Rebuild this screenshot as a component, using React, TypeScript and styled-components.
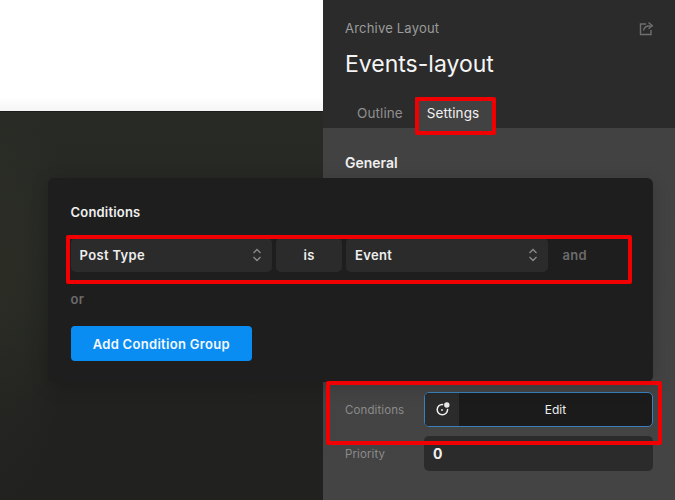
import React from "react";
import styled, { createGlobalStyle } from "styled-components";

const Global = createGlobalStyle`
  html, body { margin: 0; padding: 0; background: #222; }
  body { font-family: Inter, "Liberation Sans", sans-serif; -webkit-font-smoothing: antialiased; }
  * { box-sizing: border-box; }
`;

const Page = styled.div`
  position: relative;
  width: 675px;
  height: 500px;
  overflow: hidden;
  display: grid;
  grid-template-columns: 323px 352px;
`;

const Canvas = styled.div`
  display: flex;
  flex-direction: column;
  height: 500px;
`;

const Preview = styled.div`
  height: 111px;
  background: linear-gradient(180deg, #ffffff 0%, #ffffff 88%, #f5f5f5 100%);
`;

const Backdrop = styled.div`
  flex: 1;
  border-top: 1px solid #1c1c1c;
  background:
    radial-gradient(ellipse 70px 220px at 0% 45%, rgba(58, 62, 44, 0.3), transparent 100%),
    linear-gradient(180deg, #282a25 0%, #252622 45%, #212120 75%, #212120 100%);
`;

const Sidebar = styled.aside`
  display: flex;
  flex-direction: column;
  height: 500px;
`;

const Header = styled.header`
  height: 128px;
  background: #2b2b2b;
  padding: 20px 22px 0 22px;
  display: flex;
  flex-direction: column;
`;

const TopLine = styled.div`
  display: flex;
  justify-content: space-between;
  align-items: center;
  height: 16px;
`;

const Kicker = styled.span`
  font-size: 13px;
  letter-spacing: 0.2px;
  color: #9b9b9b;
`;

const ShareIcon = styled.svg`
  width: 15px;
  height: 15px;
  margin-right: -1px;
  fill: none;
  stroke: #6f6f6f;
  stroke-width: 1.4;
`;

const Title = styled.h1`
  margin: 13px 0 0;
  font-size: 23px;
  line-height: 30px;
  font-weight: 400;
  color: #f5f5f5;
`;

const Tabs = styled.nav`
  display: flex;
  margin-top: 18px;
  align-items: flex-end;
`;

const Tab = styled.div<{ $active?: boolean }>`
  height: 31px;
  padding: 0 ${(p) => (p.$active ? 14 : 12)}px 0 12px;
  display: flex;
  align-items: center;
  font-size: 13.5px;
  letter-spacing: 0.1px;
  color: ${(p) => (p.$active ? "#f2f2f2" : "#8f8f8f")};
  background: ${(p) => (p.$active ? "#424242" : "transparent")};
`;

const Body = styled.div`
  flex: 1;
  background: linear-gradient(180deg, #424242, #444444);
  padding: 27px 22px 0 22px;
  display: flex;
  flex-direction: column;
`;

const SectionTitle = styled.h2`
  margin: 0;
  font-size: 14px;
  line-height: 16px;
  font-weight: 600;
  color: #f0f0f0;
`;

const FieldRow = styled.div`
  display: grid;
  grid-template-columns: 79px 229px;
  align-items: center;
  margin-bottom: 9px;
`;

const Fields = styled.div`
  margin-top: 221px;
`;

const FieldLabel = styled.label`
  font-size: 11.5px;
  letter-spacing: 0.1px;
  color: #8b8b8b;
`;

const EditControl = styled.div`
  height: 35px;
  display: flex;
  border: 1px solid #3a80bd;
  border-radius: 5px;
  background: #1b1b1b;
  overflow: hidden;
`;

const EditIcon = styled.div`
  width: 34px;
  display: flex;
  align-items: center;
  justify-content: center;
  background: #2b2b2b;
`;

const EditText = styled.div`
  flex: 1;
  display: flex;
  align-items: center;
  justify-content: center;
  font-size: 12px;
  font-weight: 400;
  color: #ececec;
`;

const NumberField = styled.div`
  height: 35px;
  padding-left: 9px;
  display: flex;
  align-items: center;
  font-size: 14px;
  font-weight: 700;
  color: #f0f0f0;
  background: #2b2b2b;
  border-radius: 5px;
`;

const Modal = styled.section`
  position: absolute;
  left: 48px;
  top: 178px;
  width: 605px;
  height: 204px;
  padding: 26px 22.5px 0;
  background: #1e1e1e;
  border-radius: 6px;
  box-shadow: 0 4px 18px rgba(0, 0, 0, 0.18);
`;

const ModalTitle = styled.h3`
  margin: 0;
  font-size: 13px;
  line-height: 16px;
  font-weight: 600;
  letter-spacing: 0.2px;
  color: #f0f0f0;
`;

const ConditionRow = styled.div`
  display: flex;
  align-items: center;
  gap: 4px;
  margin-top: 18px;
`;

const SelectBox = styled.div`
  width: 201.5px;
  height: 34px;
  padding: 0 9px;
  display: flex;
  align-items: center;
  justify-content: space-between;
  background: #2b2b2b;
  border-radius: 5px;
  font-size: 13px;
  font-weight: 600;
  letter-spacing: 0.35px;
  color: #eeeeee;
`;

const Operator = styled(SelectBox)`
  width: 66px;
  justify-content: center;
  padding: 0;
`;

const Chevrons = styled.svg`
  width: 10px;
  height: 14px;
  margin-right: 1px;
  fill: none;
  stroke: #8a8a8a;
  stroke-width: 1.3;
`;

const Joiner = styled.span`
  margin-left: 11px;
  font-size: 13px;
  font-weight: 600;
  letter-spacing: 0.3px;
  color: #6b6b6b;
`;

const OrText = styled(Joiner)`
  display: block;
  margin: 19px 0 0;
  line-height: 16px;
`;

const AddButton = styled.button`
  display: block;
  margin-top: 19px;
  width: 181.5px;
  height: 35px;
  padding: 0;
  border: 0;
  border-radius: 4px;
  background: #0a8df2;
  font-family: inherit;
  font-size: 13px;
  font-weight: 600;
  letter-spacing: 0.3px;
  color: #f4f9ff;
`;

const Callout = styled.div<{ $l: number; $t: number; $w: number; $h: number }>`
  position: absolute;
  left: ${(p) => p.$l}px;
  top: ${(p) => p.$t}px;
  width: ${(p) => p.$w}px;
  height: ${(p) => p.$h}px;
  border: 4px solid #f00000;
  border-radius: 2px;
  pointer-events: none;
`;

const UpDown = () => (
  <Chevrons viewBox="0 0 10 14">
    <path d="M1.5 5 5 1.5 8.5 5M1.5 9 5 12.5 8.5 9" />
  </Chevrons>
);

export default function App() {
  return (
    <>
      <Global />
      <Page>
        <Canvas>
          <Preview />
          <Backdrop />
        </Canvas>
        <Sidebar>
          <Header>
            <TopLine>
              <Kicker>Archive Layout</Kicker>
              <ShareIcon viewBox="0 0 15 15">
                <path d="M7 3H1.5v10.5h10.5V9" />
                <path d="M4.5 9.5C5 6.5 7.5 4.8 11.5 4.8M9.5 1.5l3.8 3.2-3.8 3" />
              </ShareIcon>
            </TopLine>
            <Title>Events-layout</Title>
            <Tabs>
              <Tab>Outline</Tab>
              <Tab $active>Settings</Tab>
            </Tabs>
          </Header>
          <Body>
            <SectionTitle>General</SectionTitle>
            <Fields>
              <FieldRow>
                <FieldLabel>Conditions</FieldLabel>
                <EditControl>
                  <EditIcon>
                    <svg width="15" height="15" viewBox="0 0 15 15" fill="none">
                      <path d="M7.6 2.4A5.2 5.2 0 1 0 12.6 7.6" stroke="#f0f0f0" strokeWidth="1.5" strokeLinecap="round" />
                      <circle cx="7" cy="8" r="0.9" fill="#f0f0f0" />
                      <circle cx="11.8" cy="3" r="2.7" fill="#e8e8e8" />
                    </svg>
                  </EditIcon>
                  <EditText>Edit</EditText>
                </EditControl>
              </FieldRow>
              <FieldRow>
                <FieldLabel>Priority</FieldLabel>
                <NumberField>0</NumberField>
              </FieldRow>
            </Fields>
          </Body>
        </Sidebar>

        <Modal>
          <ModalTitle>Conditions</ModalTitle>
          <ConditionRow>
            <SelectBox>
              Post Type
              <UpDown />
            </SelectBox>
            <Operator>is</Operator>
            <SelectBox>
              Event
              <UpDown />
            </SelectBox>
            <Joiner>and</Joiner>
          </ConditionRow>
          <OrText>or</OrText>
          <AddButton>Add Condition Group</AddButton>
        </Modal>

        <Callout $l={415} $t={97} $w={81} $h={38} />
        <Callout $l={66} $t={235} $w={566} $h={49} />
        <Callout $l={326} $t={381} $w={336} $h={64} />
      </Page>
    </>
  );
}
